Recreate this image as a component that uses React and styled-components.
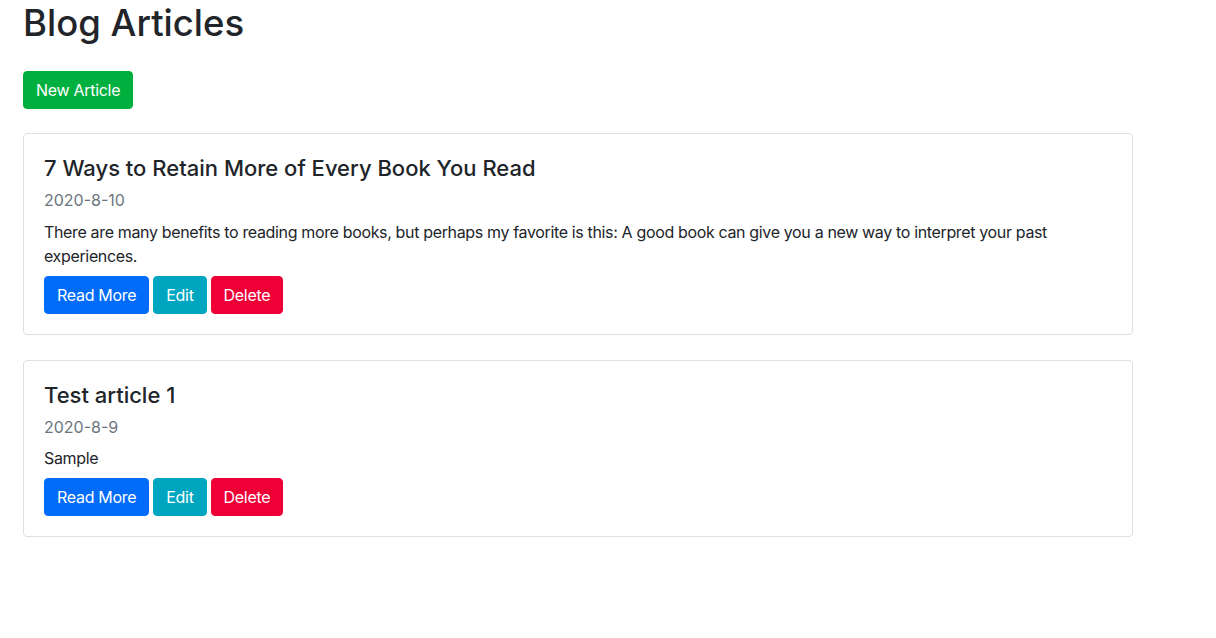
import React from "react";
import styled, { createGlobalStyle } from "styled-components";

const GlobalStyle = createGlobalStyle`
  * { box-sizing: border-box; }
  html, body { margin: 0; padding: 0; background: #ffffff; }
  body {
    font-family: Inter, "Noto Sans", "Liberation Sans", Arial, sans-serif;
    font-size: 16px;
    line-height: 1.5;
    color: #212529;
  }
`;

const Page = styled.div`
  padding: 1px 23px 40px;
  width: 1156px;
`;

const Heading = styled.h1`
  margin: 0;
  font-size: 36.5px;
  font-weight: 500;
  line-height: 44px;
  color: #212529;
`;

const Toolbar = styled.div`
  display: flex;
  margin-top: 26px;
  margin-bottom: 24px;
`;

const tones = {
  success: "#00b03f",
  primary: "#006cf9",
  info: "#00a5bf",
  danger: "#ee0037",
};

const Button = styled.button`
  display: inline-flex;
  align-items: center;
  justify-content: center;
  height: 38px;
  padding: 0 12px;
  border: 1px solid ${(p) => tones[p.$tone]};
  border-radius: 4px;
  background: ${(p) => tones[p.$tone]};
  color: #ffffff;
  font-family: inherit;
  font-size: 16px;
  font-weight: 400;
  letter-spacing: -0.3px;
  line-height: 24px;
  cursor: pointer;
`;

const List = styled.div`
  display: flex;
  flex-direction: column;
  gap: 25px;
`;

const Card = styled.article`
  width: 1110px;
  border: 1px solid #dfdfdf;
  border-radius: 4px;
  background: #ffffff;
  padding: 21px 20px 20px;
`;

const Title = styled.h4`
  margin: 0 0 10px;
  font-size: 22px;
  font-weight: 500;
  line-height: 1.2;
  color: #212529;
`;

const DateLine = styled.div`
  margin: 0 0 9px;
  font-size: 16px;
  line-height: 1.2;
  color: #6c757d;
`;

const Text = styled.p`
  margin: 0 0 8px;
  font-size: 16px;
  line-height: 24px;
  letter-spacing: -0.35px;
  color: #212529;
`;

const Actions = styled.div`
  display: flex;
  gap: 4px;
`;

const articles = [
  {
    title: "7 Ways to Retain More of Every Book You Read",
    date: "2020-8-10",
    text:
      "There are many benefits to reading more books, but perhaps my favorite is this: A good book can give you a new way to interpret your past experiences.",
  },
  {
    title: "Test article 1",
    date: "2020-8-9",
    text: "Sample",
  },
];

export default function App() {
  return (
    <>
      <GlobalStyle />
      <Page>
        <Heading>Blog Articles</Heading>
        <Toolbar>
          <Button $tone="success">New Article</Button>
        </Toolbar>
        <List>
          {articles.map((a) => (
            <Card key={a.title}>
              <Title>{a.title}</Title>
              <DateLine>{a.date}</DateLine>
              <Text>{a.text}</Text>
              <Actions>
                <Button $tone="primary">Read More</Button>
                <Button $tone="info">Edit</Button>
                <Button $tone="danger">Delete</Button>
              </Actions>
            </Card>
          ))}
        </List>
      </Page>
    </>
  );
}
